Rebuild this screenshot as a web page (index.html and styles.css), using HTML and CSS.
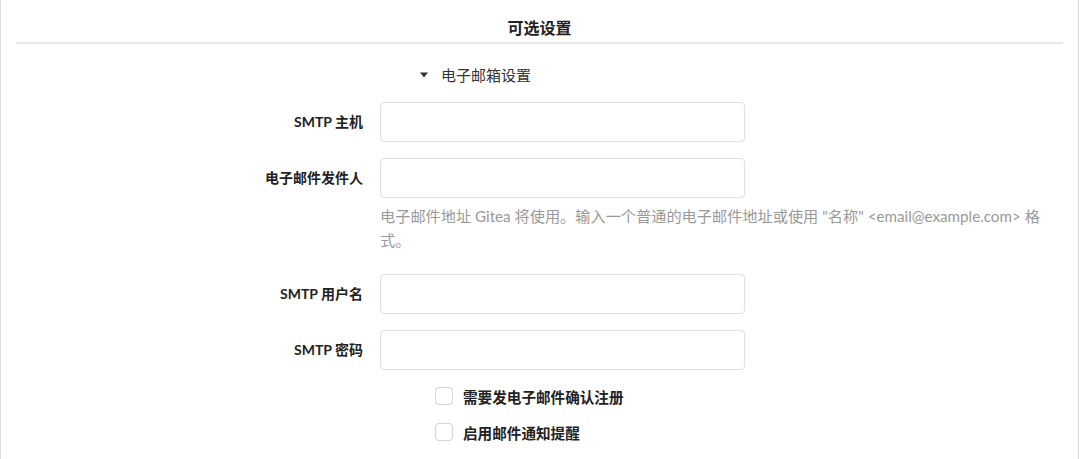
FILE: index.html
```html
<!DOCTYPE html>
<html lang="zh-CN">
<head>
<meta charset="utf-8">
<title>可选设置</title>
<link rel="stylesheet" href="styles.css">
</head>
<body>
<div class="page">
  <h4 class="section-title">可选设置</h4>
  <details class="group" open>
    <summary class="group-summary"><svg class="caret" width="8" height="6" viewBox="0 0 8 6"><path d="M0 0.5 H8 L4 5.5 Z" fill="#333"/></svg><span>电子邮箱设置</span></summary>
    <div class="form">
      <div class="field">
        <label class="field-label" for="smtp-host">SMTP 主机</label>
        <input class="text-input" id="smtp-host" type="text">
      </div>
      <div class="field field-help">
        <label class="field-label" for="smtp-from">电子邮件发件人</label>
        <input class="text-input" id="smtp-from" type="text">
        <p class="help">电子邮件地址 Gitea 将使用。输入一个普通的电子邮件地址或使用 "名称" &lt;email@example.com&gt; 格式。</p>
      </div>
      <div class="field">
        <label class="field-label" for="smtp-user">SMTP 用户名</label>
        <input class="text-input" id="smtp-user" type="text">
      </div>
      <div class="field field-last">
        <label class="field-label" for="smtp-pass">SMTP 密码</label>
        <input class="text-input" id="smtp-pass" type="password">
      </div>
      <div class="check-row">
        <input class="check" id="confirm" type="checkbox">
        <label class="check-label" for="confirm">需要发电子邮件确认注册</label>
      </div>
      <div class="check-row">
        <input class="check" id="notify" type="checkbox">
        <label class="check-label" for="notify">启用邮件通知提醒</label>
      </div>
    </div>
  </details>
</div>
</body>
</html>
```

FILE: styles.css
```css
html, body {
  margin: 0;
  padding: 0;
  background: #fff;
}
body {
  font-family: "Lato", "Noto Sans CJK SC", sans-serif;
  font-size: 14px;
  color: #333;
}
.page {
  box-sizing: border-box;
  width: 1079px;
  min-height: 100vh;
  border-left: 1px solid #dcdcdc;
  border-right: 1px solid #dcdcdc;
  padding: 0 15px;
}
.section-title {
  margin: 0;
  padding: 18px 0 4px;
  font-size: 16px;
  line-height: 20px;
  font-weight: 700;
  text-align: center;
  color: #222;
  border-bottom: 2px solid #e8e8e8;
}
.group {
  margin-top: 21px;
}
.group-summary {
  list-style: none;
  display: flex;
  align-items: center;
  gap: 13px;
  padding-left: 404px;
  line-height: 20px;
  font-size: 15px;
  color: #333;
  cursor: pointer;
}
.group-summary::-webkit-details-marker {
  display: none;
}
.caret {
  display: block;
}
.form {
  margin-top: 17px;
}
.field {
  display: grid;
  grid-template-columns: 347px 365px 1fr;
  column-gap: 17px;
  margin-bottom: 16px;
}
.field-help {
  margin-bottom: 22px;
}
.field-last {
  margin-bottom: 8px;
}
.field-label {
  grid-column: 1;
  text-align: right;
  line-height: 40px;
  font-weight: 700;
  font-size: 14px;
  color: #222;
}
.text-input {
  grid-column: 2;
  box-sizing: border-box;
  width: 365px;
  height: 40px;
  margin: 0;
  border: 1px solid #dedede;
  border-radius: 4px;
  background: #fff;
  font: inherit;
  padding: 0 12px;
}
.help {
  grid-column: 2 / 4;
  margin: 6px 0 0;
  padding-right: 0;
  font-size: 15.2px;
  line-height: 24px;
  color: #999;
}
.check-row {
  display: flex;
  align-items: center;
  height: 36px;
  padding-left: 419px;
}
.check {
  appearance: none;
  -webkit-appearance: none;
  box-sizing: border-box;
  width: 18px;
  height: 18px;
  margin: 0 10px 0 0;
  border: 1px solid #d4d4d4;
  border-radius: 4px;
  background: #fff;
}
.check-label {
  font-weight: 700;
  font-size: 14.6px;
  color: #222;
}
```
